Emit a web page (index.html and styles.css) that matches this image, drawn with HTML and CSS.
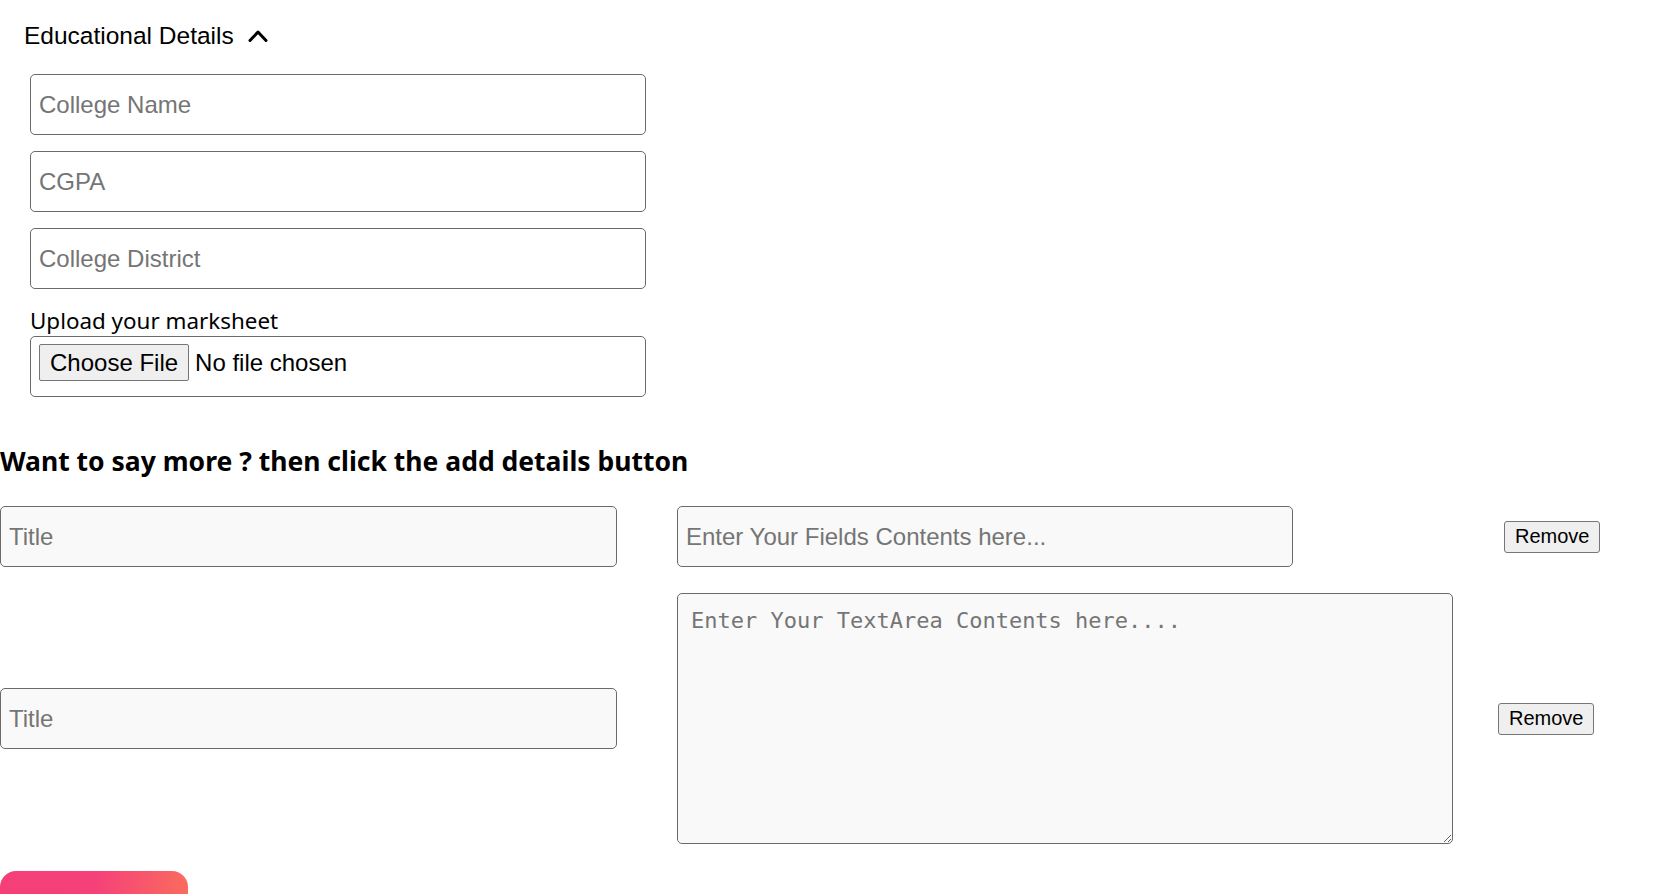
FILE: index.html
```html
<!DOCTYPE html>
<html lang="en">
<head>
<meta charset="utf-8">
<title>Educational Details</title>
<link rel="stylesheet" href="styles.css">
</head>
<body>
  <section class="edu">
    <div class="edu-head">
      <button class="edu-toggle" type="button">Educational Details
        <svg class="chev" width="20" height="14" viewBox="0 0 20 14" aria-hidden="true"><polyline points="2,11.5 10,3 18,11.5" fill="none" stroke="#000" stroke-width="3" stroke-linecap="round" stroke-linejoin="round"/></svg>
      </button>
    </div>
    <div class="edu-fields">
      <input class="field" type="text" placeholder="College Name">
      <input class="field" type="text" placeholder="CGPA">
      <input class="field" type="text" placeholder="College District">
      <div class="upload">
        <label class="upload-label">Upload your marksheet</label>
        <div class="file-box">
          <button class="file-btn" type="button">Choose File</button>
          <span class="file-name">No file chosen</span>
        </div>
      </div>
    </div>
  </section>

  <h2 class="more-title">Want to say more ? then click the add details button</h2>

  <div class="extra">
    <div class="extra-row row-a">
      <input class="field field--alt title-in" type="text" placeholder="Title">
      <input class="field field--alt content-in" type="text" placeholder="Enter Your Fields Contents here...">
      <button class="remove remove--a" type="button">Remove</button>
    </div>
    <div class="extra-row row-b">
      <input class="field field--alt title-in" type="text" placeholder="Title">
      <textarea class="area" placeholder="Enter Your TextArea Contents here...."></textarea>
      <button class="remove remove--b" type="button">Remove</button>
    </div>
  </div>

  <button class="add-btn" type="button"></button>
</body>
</html>
```

FILE: styles.css
```css
html, body {
  margin: 0;
  padding: 0;
  background: #ffffff;
}

body {
  font-family: "Noto Sans", "Open Sans", sans-serif;
  color: #000;
  overflow: hidden;
  height: 894px;
}

.edu {
  padding-left: 24px;
}

.edu-head {
  padding-top: 22px;
  height: 28px;
}

.edu-toggle {
  display: inline-flex;
  align-items: center;
  gap: 14px;
  background: none;
  border: 0;
  padding: 0;
  margin: 0;
  font-family: "Liberation Sans", Arial, sans-serif;
  font-size: 24.5px;
  line-height: 28px;
  color: #000;
}

.chev {
  display: block;
  margin-top: -1px;
}

.edu-fields {
  margin-top: 24px;
  margin-left: 6px;
  display: flex;
  flex-direction: column;
  gap: 16px;
  width: 616px;
}

.field {
  box-sizing: border-box;
  width: 616px;
  height: 61px;
  margin: 0;
  padding: 0 8px;
  border: 1px solid #6a6a6a;
  border-radius: 5px;
  background: #ffffff;
  font-family: "Liberation Sans", Arial, sans-serif;
  font-size: 24px;
  color: #000;
  outline: none;
}

.field::placeholder {
  color: #757575;
}

.field--alt {
  background: #f9f9f9;
}

.upload {
  display: flex;
  flex-direction: column;
  margin-top: 1px;
}

.upload-label {
  font-size: 22.4px;
  line-height: 30px;
  color: #000;
}

.file-box {
  box-sizing: border-box;
  height: 61px;
  border: 1px solid #6a6a6a;
  border-radius: 5px;
  display: flex;
  align-items: flex-start;
  padding: 7px 0 0 8px;
  gap: 6px;
}

.file-btn {
  box-sizing: border-box;
  height: 37px;
  padding: 0 10px;
  margin: 0;
  background: #efefef;
  border: 1px solid #767676;
  border-radius: 2px;
  font-family: "Liberation Sans", Arial, sans-serif;
  font-size: 24px;
  color: #000;
}

.file-name {
  font-family: "Liberation Sans", Arial, sans-serif;
  font-size: 24px;
  line-height: 37px;
  color: #000;
}

.more-title {
  margin: 47px 0 0 0;
  font-family: "Noto Sans", "Open Sans", sans-serif;
  font-weight: 700;
  font-size: 26.5px;
  line-height: 34px;
  color: #000;
}

.extra {
  margin-top: 28px;
  display: flex;
  flex-direction: column;
  gap: 26px;
}

.extra-row {
  display: grid;
  grid-template-columns: 617px 776px auto;
  column-gap: 60px;
  align-items: center;
}

.title-in {
  width: 617px;
}

.content-in {
  width: 616px;
}

.area {
  box-sizing: border-box;
  width: 776px;
  height: 251px;
  margin: 0;
  padding: 14px 13px;
  border: 1px solid #6a6a6a;
  border-radius: 5px;
  background: #f9f9f9;
  font-family: "DejaVu Sans Mono", monospace;
  font-size: 22px;
  color: #000;
  outline: none;
}

.area::placeholder {
  color: #757575;
}

.remove {
  box-sizing: border-box;
  justify-self: start;
  height: 32px;
  padding: 0 10px;
  margin: 0;
  background: #efefef;
  border: 1px solid #767676;
  border-radius: 3px;
  font-family: "Liberation Sans", Arial, sans-serif;
  font-size: 20px;
  color: #000;
}

.remove--a {
  margin-left: -9px;
}

.remove--b {
  margin-left: -15px;
}

.add-btn {
  display: block;
  margin-top: 27px;
  width: 188px;
  height: 60px;
  border: 0;
  padding: 0;
  border-radius: 16px;
  background: linear-gradient(100deg, #f53f79 0%, #f5407a 48%, #fa6f5b 100%);
}
```
